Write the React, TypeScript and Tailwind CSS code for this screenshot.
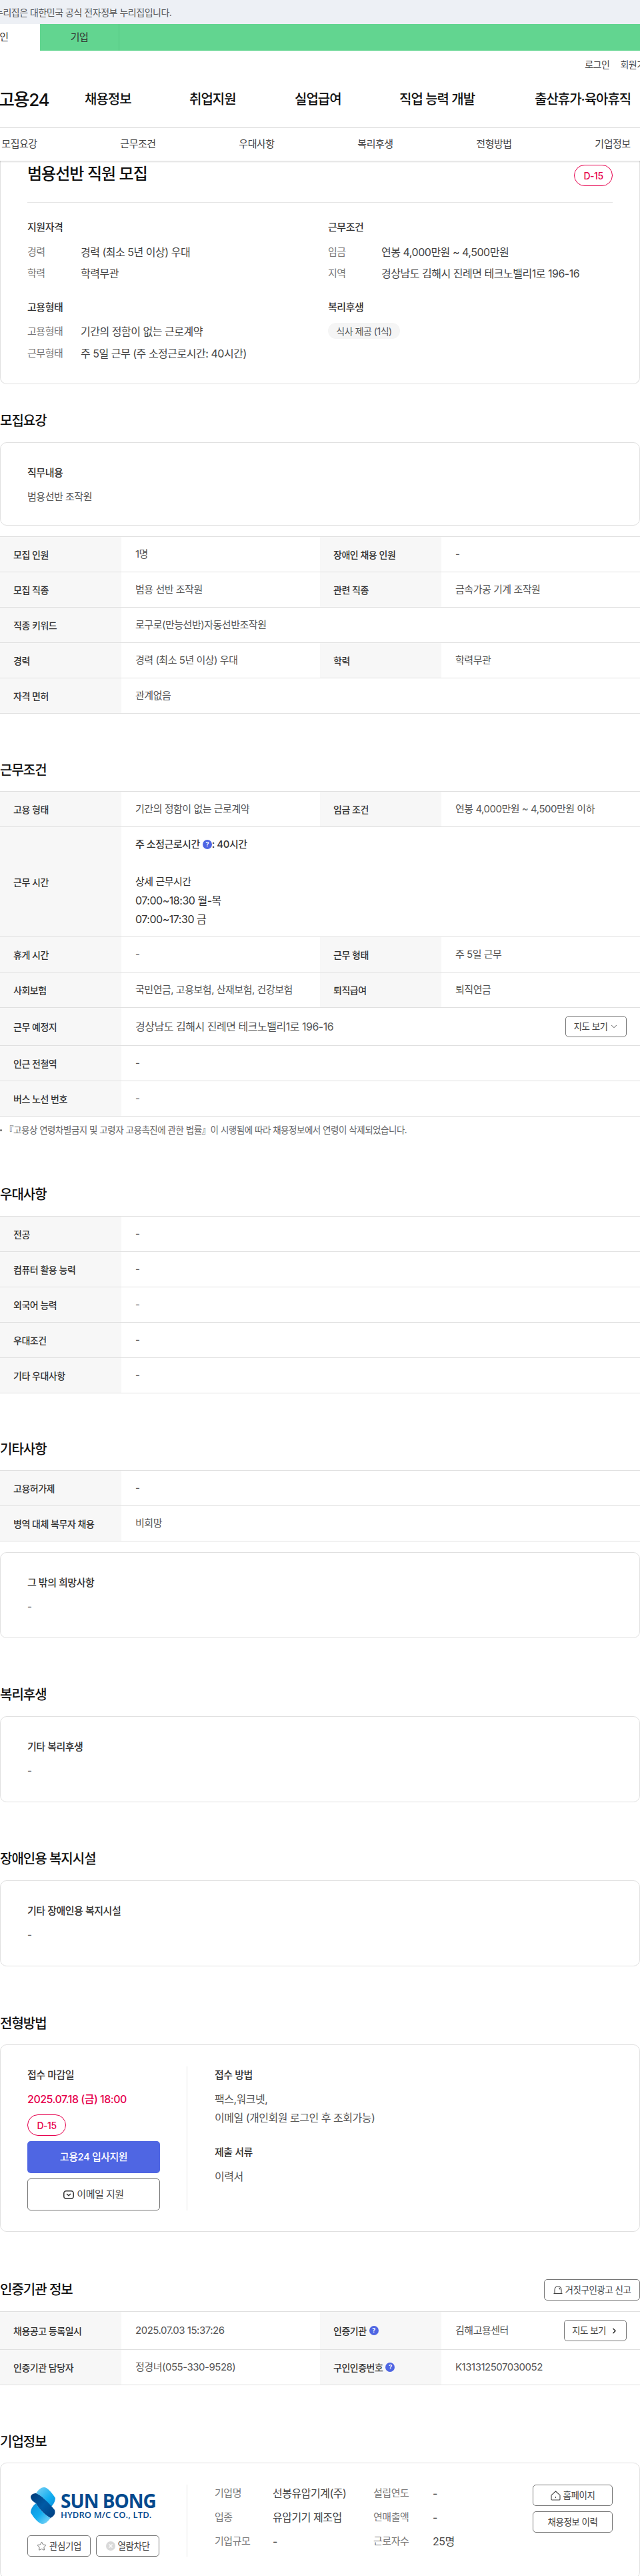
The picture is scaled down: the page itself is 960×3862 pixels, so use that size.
import React from 'react';
import { ChevronDown, ChevronRight, Star } from 'lucide-react';

const font = 'font-["Inter","Noto_Sans_CJK_KR","Noto_Sans",sans-serif]';

function HelpDot() {
  return (
    <span className="inline-flex w-[14px] h-[14px] rounded-full bg-[#4f66e3] text-white text-[9px] font-bold items-center justify-center align-middle">
      ?
    </span>
  );
}

function Badge() {
  return (
    <span className="flex w-[58px] h-[32px] items-center justify-center rounded-[16px] border border-[#e6004d] text-[#e6004d] text-[14px] font-medium">
      D-15
    </span>
  );
}

function SectionTitle({ children, className = '' }: { children: React.ReactNode; className?: string }) {
  return <h2 className={`text-[20px] leading-[30px] font-medium text-[#111] tracking-[-0.05em] ${className}`}>{children}</h2>;
}

function Label({ children, className = '' }: { children: React.ReactNode; className?: string }) {
  return (
    <div className={`w-[182px] shrink-0 bg-[#f7f7f7] px-[20px] flex items-center text-[14px] font-medium text-[#333] ${className}`}>
      {children}
    </div>
  );
}

function Value({ children, className = '' }: { children: React.ReactNode; className?: string }) {
  return <div className={`flex items-center px-[21px] py-[12px] text-[15px] leading-[28px] text-[#555] ${className}`}>{children}</div>;
}

function Row2({ a, b, c, d }: { a: string; b: string; c: string; d: string }) {
  return (
    <div className="flex border-b border-[#e0e0e0]">
      <Label>{a}</Label>
      <Value className="w-[298px]">{b}</Value>
      <Label>{c}</Label>
      <Value className="flex-1">{d}</Value>
    </div>
  );
}

function Row1({ a, b }: { a: string; b: string }) {
  return (
    <div className="flex border-b border-[#e0e0e0]">
      <Label>{a}</Label>
      <Value className="flex-1">{b}</Value>
    </div>
  );
}

function BoxCard({ title, text, className = '' }: { title: string; text: string; className?: string }) {
  return (
    <div className={`border border-[#e0e0e0] rounded-[10px] px-[40px] pt-[34px] pb-[35px] ${className}`}>
      <div className="text-[15px] leading-[22px] font-medium text-[#333]">{title}</div>
      <div className="mt-[14px] text-[15px] leading-[22px] text-[#555]">{text}</div>
    </div>
  );
}

function OutlineBtn({ children, className = '' }: { children: React.ReactNode; className?: string }) {
  return (
    <span className={`flex items-center justify-center rounded-[5px] border border-[#767676] text-[13.5px] text-[#444] ${className}`}>
      {children}
    </span>
  );
}

function SummaryRow({ k, v }: { k: string; v: string }) {
  return (
    <div className="flex text-[16px] leading-[22px]">
      <span className="w-[80px] text-[15px] text-[#777]">{k}</span>
      <span className="text-[#444]">{v}</span>
    </div>
  );
}

function SunBongLogo() {
  return (
    <div className="flex items-center gap-[7px] h-[55px] ml-[5px]">
      <svg width="38" height="55" viewBox="0 0 38 55" className="shrink-0">
        <defs>
          <linearGradient id="sbTop" x1="0" y1="0" x2="1" y2="1">
            <stop offset="0" stopColor="#7fd2f5" />
            <stop offset="0.6" stopColor="#12aef0" />
            <stop offset="1" stopColor="#0b8fdc" />
          </linearGradient>
          <linearGradient id="sbBot" x1="0" y1="0" x2="1" y2="1">
            <stop offset="0" stopColor="#0b8fdc" />
            <stop offset="0.5" stopColor="#12aef0" />
            <stop offset="1" stopColor="#8fdaf7" />
          </linearGradient>
          <linearGradient id="sbDark" x1="0" y1="0" x2="1" y2="1">
            <stop offset="0" stopColor="#003a78" />
            <stop offset="0.5" stopColor="#005aa5" />
            <stop offset="1" stopColor="#003f80" />
          </linearGradient>
        </defs>
        <path d="M8 9 C12 3 16 0 20 0 C25 0 31 7 37 16 C37 22 33 27 30 30 C26 22 16 12 8 9Z" fill="url(#sbTop)" />
        <path d="M0 38 C0 32 4 27 8 24 C12 32 22 42 30 46 C26 51 22 55 18 55 C13 55 6 48 0 38Z" fill="url(#sbBot)" />
        <path d="M0 15 C0 11 4 9 8 9 C16 12 26 22 36 34 C37 38 37 42 30 46 C22 42 12 32 8 24 C5 22 1 20 0 15Z" fill="url(#sbDark)" />
      </svg>
      <div className="flex flex-col font-['Open_Sans',sans-serif] text-[#034a8e]">
        <span className="text-[28px] leading-[28px] font-bold tracking-[-0.035em]">SUN BONG</span>
        <span className="text-[13px] leading-[15px] font-semibold tracking-[0.01em] whitespace-nowrap">HYDRO M/C CO., LTD.</span>
      </div>
    </div>
  );
}

export default function App() {
  return (
    <div className={`w-[960px] h-[3862px] overflow-hidden bg-white tracking-[-0.03em] ${font}`}>
      {/* gov notice */}
      <div className="h-[36px] bg-[#edf0f5] flex items-center text-[14px] text-[#555] -ml-[8px]">
        누리집은 대한민국 공식 전자정부 누리집입니다.
      </div>

      {/* user type tabs */}
      <div className="h-[40px] bg-[#62d590] flex text-[15px] text-[#333]">
        <div className="w-[60px] bg-white flex items-center overflow-hidden">
          <span className="-ml-[14px] whitespace-nowrap">개인</span>
        </div>
        <div className="w-[119px] flex items-center justify-center border-r border-[#55c683]">기업</div>
      </div>

      <div className="h-[40px] flex items-center justify-end gap-[16px] text-[14px] text-[#444] whitespace-nowrap -mr-[20px]">
        <span>로그인</span>
        <span>회원가입</span>
      </div>

      {/* main nav */}
      <div className="h-[76px] flex items-start border-b border-[#e5e5e5] whitespace-nowrap">
        <div className="flex items-center h-[75px] text-[#111]">
          <span className="w-[129px] -ml-[2px] text-[26px] font-medium tracking-[-0.05em] pb-[9px]">고용24</span>
          <nav className="flex text-[20px] font-medium tracking-[-0.05em] pb-[9px]">
            <span className="w-[157px]">채용정보</span>
            <span className="w-[158px]">취업지원</span>
            <span className="w-[157px]">실업급여</span>
            <span className="w-[203px]">직업 능력 개발</span>
            <span>출산휴가·육아휴직</span>
          </nav>
        </div>
      </div>

      {/* anchor tabs */}
      <div className="relative z-10 h-[49px] bg-white shadow-[0_1px_3px_rgba(0,0,0,0.2)] flex items-center -ml-[60px] w-[1068px] text-[15px] text-[#444]">
        {['모집요강', '근무조건', '우대사항', '복리후생', '전형방법', '기업정보'].map((t) => (
          <span key={t} className="w-[178px] text-center">{t}</span>
        ))}
      </div>

      {/* summary */}
      <div className="border-x border-b border-[#e0e0e0] rounded-b-[10px] h-[335px] px-[40px]">
        <div className="flex items-start justify-between h-[63px] border-b border-[#e5e5e5]">
          <h1 className="text-[24px] leading-[36px] mt-[2px] font-medium text-[#111] tracking-[-0.04em]">범용선반 직원 모집</h1>
          <div className="mt-[6px]"><Badge /></div>
        </div>
        <div className="flex mt-[26px]">
          <div className="w-[451px]">
            <div className="text-[15px] leading-[22px] font-medium text-[#333]">지원자격</div>
            <div className="mt-[15px] flex flex-col gap-[10px]">
              <SummaryRow k="경력" v="경력 (최소 5년 이상) 우대" />
              <SummaryRow k="학력" v="학력무관" />
            </div>
            <div className="mt-[29px] text-[15px] leading-[22px] font-medium text-[#333]">고용형태</div>
            <div className="mt-[14px] flex flex-col gap-[11px]">
              <SummaryRow k="고용형태" v="기간의 정함이 없는 근로계약" />
              <SummaryRow k="근무형태" v="주 5일 근무 (주 소정근로시간: 40시간)" />
            </div>
          </div>
          <div className="flex-1">
            <div className="text-[15px] leading-[22px] font-medium text-[#333]">근무조건</div>
            <div className="mt-[15px] flex flex-col gap-[10px]">
              <SummaryRow k="임금" v="연봉 4,000만원 ~ 4,500만원" />
              <SummaryRow k="지역" v="경상남도 김해시 진례면 테크노밸리1로 196-16" />
            </div>
            <div className="mt-[29px] text-[15px] leading-[22px] font-medium text-[#333]">복리후생</div>
            <span className="mt-[12px] inline-flex h-[24px] w-[108px] items-center justify-center rounded-full bg-[#f5f5f5] text-[14px] text-[#555]">
              식사 제공 (1식)
            </span>
          </div>
        </div>
      </div>

      {/* 모집요강 */}
      <SectionTitle className="mt-[40px]">모집요강</SectionTitle>
      <BoxCard className="mt-[17px] !pb-[31px]" title="직무내용" text="범용선반 조작원" />
      <div className="mt-[16px] border-t border-[#e0e0e0]">
        <Row2 a="모집 인원" b="1명" c="장애인 채용 인원" d="-" />
        <Row2 a="모집 직종" b="범용 선반 조작원" c="관련 직종" d="금속가공 기계 조작원" />
        <Row1 a="직종 키워드" b="로구로(만능선반)자동선반조작원" />
        <Row2 a="경력" b="경력 (최소 5년 이상) 우대" c="학력" d="학력무관" />
        <Row1 a="자격 면허" b="관계없음" />
      </div>

      {/* 근무조건 */}
      <SectionTitle className="mt-[70px]">근무조건</SectionTitle>
      <div className="mt-[16px] border-t border-[#e0e0e0]">
        <Row2 a="고용 형태" b="기간의 정함이 없는 근로계약" c="임금 조건" d="연봉 4,000만원 ~ 4,500만원 이하" />
        <div className="flex border-b border-[#e0e0e0]">
          <Label>근무 시간</Label>
          <div className="px-[21px] py-[12px] text-[15px] leading-[28px] text-[#333]">
            <div className="font-medium flex items-center gap-[4px]">
              주 소정근로시간 <HelpDot /><span className="-ml-[4px]">: 40시간</span>
            </div>
            <div className="h-[28px]" />
            <div>상세 근무시간</div>
            <div className="text-[16px]">07:00~18:30 월-목</div>
            <div className="text-[16px]">07:00~17:30 금</div>
          </div>
        </div>
        <Row2 a="휴게 시간" b="-" c="근무 형태" d="주 5일 근무" />
        <Row2 a="사회보험" b="국민연금, 고용보험, 산재보험, 건강보험" c="퇴직급여" d="퇴직연금" />
        <div className="flex border-b border-[#e0e0e0]">
          <Label>근무 예정지</Label>
          <Value className="flex-1 justify-between !pr-[20px] !text-[16px]">
            <span>경상남도 김해시 진례면 테크노밸리1로 196-16</span>
            <OutlineBtn className="w-[92px] h-[32px] gap-[2px]">지도 보기 <ChevronDown size={14} strokeWidth={1.5} /></OutlineBtn>
          </Value>
        </div>
        <Row1 a="인근 전철역" b="-" />
        <Row1 a="버스 노선 번호" b="-" />
      </div>
      <p className="mt-[10px] h-[20px] text-[13.5px] leading-[20px] text-[#666] flex items-center gap-[4px] whitespace-nowrap">
        <span className="w-[3px] h-[3px] rounded-full bg-[#666] shrink-0" />
        『고용상 연령차별금지 및 고령자 고용촉진에 관한 법률』이 시행됨에 따라 채용정보에서 연령이 삭제되었습니다.
      </p>

      {/* 우대사항 */}
      <SectionTitle className="mt-[72px]">우대사항</SectionTitle>
      <div className="mt-[17px] border-t border-[#e0e0e0]">
        <Row1 a="전공" b="-" />
        <Row1 a="컴퓨터 활용 능력" b="-" />
        <Row1 a="외국어 능력" b="-" />
        <Row1 a="우대조건" b="-" />
        <Row1 a="기타 우대사항" b="-" />
      </div>

      {/* 기타사항 */}
      <SectionTitle className="mt-[69px]">기타사항</SectionTitle>
      <div className="mt-[16px] border-t border-[#e0e0e0]">
        <Row1 a="고용허가제" b="-" />
        <Row1 a="병역 대체 복무자 채용" b="비희망" />
      </div>
      <BoxCard className="mt-[16px]" title="그 밖의 희망사항" text="-" />

      {/* 복리후생 */}
      <SectionTitle className="mt-[70px]">복리후생</SectionTitle>
      <BoxCard className="mt-[17px]" title="기타 복리후생" text="-" />

      {/* 장애인용 복지시설 */}
      <SectionTitle className="mt-[70px]">장애인용 복지시설</SectionTitle>
      <BoxCard className="mt-[17px]" title="기타 장애인용 복지시설" text="-" />

      {/* 전형방법 */}
      <SectionTitle className="mt-[71px]">전형방법</SectionTitle>
      <div className="mt-[16px] h-[281px] border border-[#e0e0e0] rounded-[10px] px-[40px] pt-[32px] flex">
        <div className="w-[199px] shrink-0">
          <div className="mt-[2px] text-[15px] leading-[22px] font-medium text-[#333]">접수 마감일</div>
          <div className="mt-[14px] text-[16px] leading-[22px] font-medium text-[#e6004d]">2025.07.18 (금) 18:00</div>
          <div className="mt-[12px]"><Badge /></div>
          <div className="mt-[8px] h-[48px] rounded-[5px] bg-[#4f66e3] text-white text-[15px] font-medium flex items-center justify-center">고용24 입사지원</div>
          <OutlineBtn className="mt-[8px] h-[48px] gap-[4px] !text-[15px]">
            <svg width="16" height="13" viewBox="0 0 16 13" fill="none" stroke="#333" strokeWidth="1.5"><rect x="0.8" y="0.8" width="14.4" height="11.4" rx="3.5" /><path d="M5 5 L8 7.8 L11 5" /></svg>
            이메일 지원
          </OutlineBtn>
        </div>
        <div className="ml-[40px] pl-[41px] border-l border-[#e5e5e5] h-[216px] text-[16px] leading-[28px] text-[#555]">
          <div className="text-[15px] leading-[26px] font-medium text-[#333]">접수 방법</div>
          <div className="mt-[9px]">팩스,워크넷,</div>
          <div>이메일 (개인회원 로그인 후 조회가능)</div>
          <div className="mt-[24px] text-[15px] font-medium text-[#333]">제출 서류</div>
          <div className="mt-[8px]">이력서</div>
        </div>
      </div>

      {/* 인증기관 정보 */}
      <div className="mt-[71px] flex items-center justify-between h-[32px]">
        <SectionTitle>인증기관 정보</SectionTitle>
        <OutlineBtn className="w-[144px] h-[32px] gap-[4px]">
          <svg width="14" height="14" viewBox="0 0 14 14" fill="none" stroke="#444" strokeWidth="1.1"><path d="M0.5 12.5 H13.5 M2 12.5 V7 C2 3.8 4.2 1.5 7 1.5 C9.8 1.5 12 3.8 12 7 V12.5" /><path d="M8.5 3.8 C9.4 4.4 10 5.4 10 6.6" /></svg>
          거짓구인광고 신고
        </OutlineBtn>
      </div>
      <div className="mt-[16px] border-t border-[#e0e0e0]">
        <div className="flex border-b border-[#e0e0e0]">
          <Label>채용공고 등록일시</Label>
          <Value className="w-[298px]">2025.07.03 15:37:26</Value>
          <Label className="gap-[4px]">인증기관 <HelpDot /></Label>
          <Value className="flex-1 justify-between !pr-[20px]">
            <span>김해고용센터</span>
            <OutlineBtn className="w-[94px] h-[32px] gap-[6px]">지도 보기 <ChevronRight size={13} strokeWidth={2.5} className="text-[#222]" /></OutlineBtn>
          </Value>
        </div>
        <div className="flex border-b border-[#e0e0e0]">
          <Label>인증기관 담당자</Label>
          <Value className="w-[298px]">정경녀(055-330-9528)</Value>
          <Label className="gap-[4px]">구인인증번호 <HelpDot /></Label>
          <Value className="flex-1">K131312507030052</Value>
        </div>
      </div>

      {/* 기업정보 */}
      <SectionTitle className="mt-[70px]">기업정보</SectionTitle>
      <div className="mt-[16px] h-[174px] border border-[#e0e0e0] rounded-[10px] px-[40px] pt-[32px] flex">
        <div className="w-[199px] shrink-0 pt-[4px]">
          <SunBongLogo />
          <div className="mt-[17px] flex gap-[8px]">
            <OutlineBtn className="w-[95px] h-[32px] gap-[4px]"><Star size={15} strokeWidth={1.2} />관심기업</OutlineBtn>
            <OutlineBtn className="w-[95px] h-[32px] gap-[4px]">
              <svg width="14" height="14" viewBox="0 0 14 14"><circle cx="7" cy="7" r="7" fill="#d9d9d9" /><path d="M4.5 4.5 L9.5 9.5 M9.5 4.5 L4.5 9.5" stroke="#fff" strokeWidth="1.4" /></svg>
              열람차단
            </OutlineBtn>
          </div>
        </div>
        <div className="ml-[40px] pl-[41px] border-l border-[#e5e5e5] h-[108px] flex-1 flex justify-between">
          <div className="grid grid-cols-[87px_151px_89px_auto] grid-rows-[36px_36px_36px] items-center text-[16px] leading-[22px] -mt-[5px]">
            <span className="text-[15px] text-[#777]">기업명</span><span className="text-[#444]">선봉유압기계(주)</span><span className="text-[15px] text-[#777]">설립연도</span><span className="text-[#444]">-</span>
            <span className="text-[15px] text-[#777]">업종</span><span className="text-[#444]">유압기기 제조업</span><span className="text-[15px] text-[#777]">연매출액</span><span className="text-[#444]">-</span>
            <span className="text-[15px] text-[#777]">기업규모</span><span className="text-[#444]">-</span><span className="text-[15px] text-[#777]">근로자수</span><span className="text-[#444]">25명</span>
          </div>
          <div className="flex flex-col gap-[8px] w-[120px]">
            <OutlineBtn className="h-[32px] gap-[4px]">
              <svg width="15" height="15" viewBox="0 0 15 15" fill="none" stroke="#444" strokeWidth="1.1"><path d="M1 6.8 L7.5 1 L14 6.8 V13 A1 1 0 0 1 13 14 H2 A1 1 0 0 1 1 13 Z" strokeLinejoin="round" /><path d="M7.5 9 V11" /></svg>
              홈페이지
            </OutlineBtn>
            <OutlineBtn className="h-[32px]">채용정보 이력</OutlineBtn>
          </div>
        </div>
      </div>
    </div>
  );
}
